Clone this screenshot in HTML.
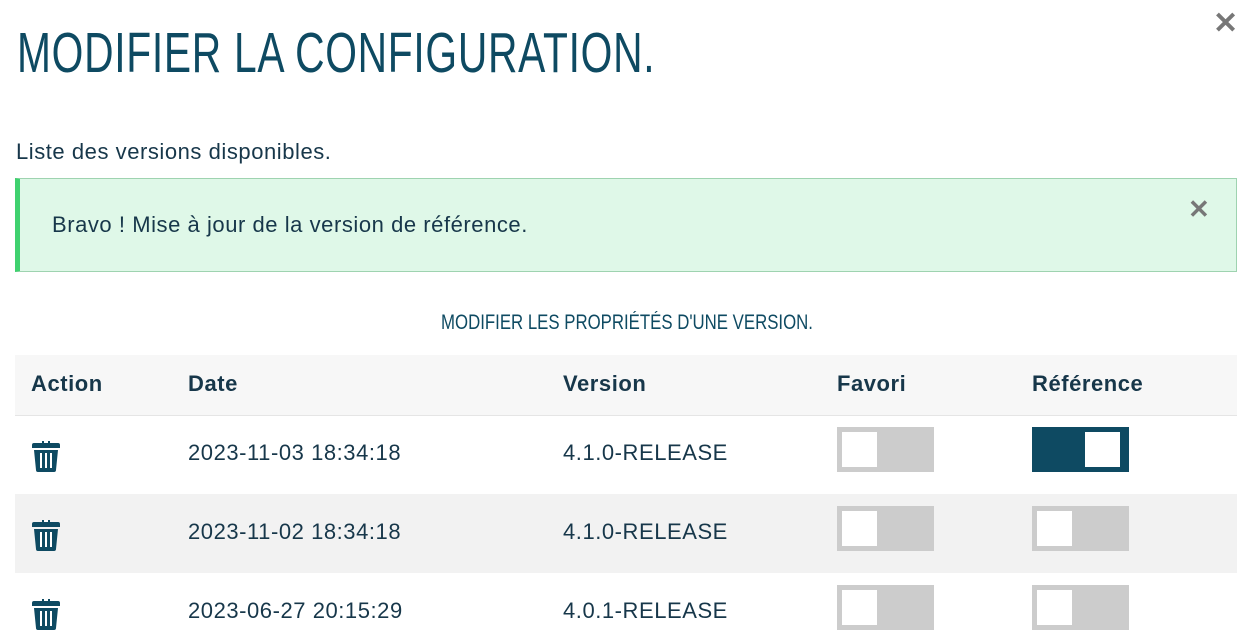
<!DOCTYPE html>
<html><head><meta charset="utf-8"><style>
body{margin:0;width:1249px;height:642px;overflow:hidden;background:#fff;font-family:"Liberation Sans",sans-serif;color:#17374a;position:relative;letter-spacing:0.55px}
.t{position:absolute;left:17px;top:20px;font-family:"Liberation Sans Narrow","Liberation Sans",sans-serif;font-size:57px;color:#0e4a62;transform-origin:0 0;transform:scaleX(0.715);white-space:nowrap;letter-spacing:1px;font-weight:normal}
.x{position:absolute;font-size:30px;color:#777;font-weight:bold}
.p{position:absolute;left:16px;top:139px;font-size:22px}
.al{position:absolute;left:15px;top:178px;width:1222px;height:94px;background:#dff8e8;border:1px solid #9ed3b0;border-left:5px solid #3fd16f;box-sizing:border-box}
.al span{position:absolute;left:32px;top:33px;font-size:22px}
.sub{position:absolute;left:0;width:1254px;text-align:center;top:311px;font-family:"Liberation Sans Narrow","Liberation Sans",sans-serif;font-size:21px;color:#0e4a62;transform:scaleX(0.8);letter-spacing:0}
.row{position:absolute;left:15px;width:1222px;font-size:22px}
.row div{position:absolute}
.tg{position:absolute;width:97px;height:45px;background:#ccc}
.tg:after{content:"";position:absolute;left:5px;top:5px;width:35px;height:35px;background:#fff}
.tg.on{background:#0e4a62}.tg.on:after{left:auto;right:9px}
</style></head><body>
<div class="t">MODIFIER LA CONFIGURATION.</div>
<div class="x" style="left:1213px;top:6px">✕</div>
<div class="p">Liste des versions disponibles.</div>
<div class="al"><span>Bravo ! Mise à jour de la version de référence.</span><div class="x" style="left:1168px;top:15px;font-size:26px">✕</div></div>
<div class="sub">MODIFIER LES PROPRIÉTÉS D'UNE VERSION.</div>
<div class="row" style="top:355px;height:60px;background:#f7f7f7;font-weight:bold">
<div style="left:16px;top:16px">Action</div><div style="left:173px;top:16px">Date</div><div style="left:548px;top:16px">Version</div><div style="left:822px;top:16px">Favori</div><div style="left:1017px;top:16px">Référence</div></div>
<div class="row" style="top:415px;height:79px;background:#fff;border-top:1px solid #e5e5e5"></div>
<div class="row" style="top:494px;height:79px;background:#f2f2f2"></div>
<div class="row" style="top:573px;height:69px;background:#fff"></div>
<svg width="0" height="0" style="position:absolute"><defs><symbol id="tr" viewBox="0 0 28 32"><path d="M10 1h8v2h8a2 2 0 0 1 2 2v3H0V5a2 2 0 0 1 2-2h8z" fill="#0e4a62"/><path d="M12 1h4v2h-4z" fill="#fff"/><path d="M2 10h24l-2 20a2 2 0 0 1-2 2H6a2 2 0 0 1-2-2z" fill="#0e4a62"/><path d="M8 13h2v15H8zM13 13h2v15h-2zM18 13h2v15h-2z" fill="#fff"/></symbol></defs></svg>
<svg style="position:absolute;left:32px;top:440px" width="28" height="32"><use href="#tr"/></svg>
<svg style="position:absolute;left:32px;top:519px" width="28" height="32"><use href="#tr"/></svg>
<svg style="position:absolute;left:32px;top:598px" width="28" height="32"><use href="#tr"/></svg>
<div class="row" style="top:440px"><div style="left:173px">2023-11-03 18:34:18</div><div style="left:548px">4.1.0-RELEASE</div></div>
<div class="row" style="top:519px"><div style="left:173px">2023-11-02 18:34:18</div><div style="left:548px">4.1.0-RELEASE</div></div>
<div class="row" style="top:598px"><div style="left:173px">2023-06-27 20:15:29</div><div style="left:548px">4.0.1-RELEASE</div></div>
<div class="tg" style="left:837px;top:427px"></div><div class="tg on" style="left:1032px;top:427px"></div>
<div class="tg" style="left:837px;top:506px"></div><div class="tg" style="left:1032px;top:506px"></div>
<div class="tg" style="left:837px;top:585px"></div><div class="tg" style="left:1032px;top:585px"></div>
</body></html>
